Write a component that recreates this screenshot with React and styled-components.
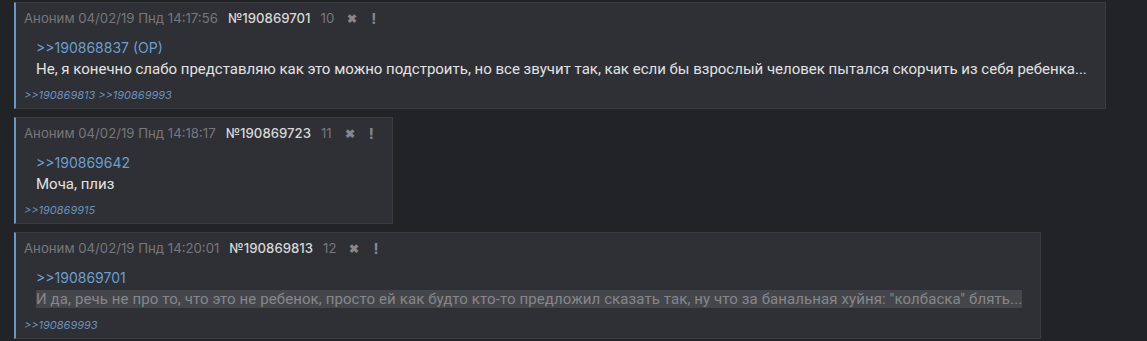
import React from 'react';
import styled, { createGlobalStyle } from 'styled-components';

const GlobalStyle = createGlobalStyle`
  html, body {
    margin: 0;
    padding: 0;
    background: #222327;
  }
  body {
    font-family: Roboto, "Noto Sans", sans-serif;
  }
`;

const posts = [
  {
    num: '190869701',
    date: '04/02/19 Пнд 14:17:56',
    idx: 10,
    reply: '>>190868837 (OP)',
    text: 'Не, я конечно слабо представляю как это можно подстроить, но все звучит так, как если бы взрослый человек пытался скорчить из себя ребенка...',
    answers: ['>>190869813', '>>190869993'],
  },
  {
    num: '190869723',
    date: '04/02/19 Пнд 14:18:17',
    idx: 11,
    reply: '>>190869642',
    text: 'Моча, плиз',
    answers: ['>>190869915'],
  },
  {
    num: '190869813',
    date: '04/02/19 Пнд 14:20:01',
    idx: 12,
    reply: '>>190869701',
    text: 'И да, речь не про то, что это не ребенок, просто ей как будто кто-то предложил сказать так, ну что за банальная хуйня: "колбаска" блять...',
    answers: ['>>190869993'],
    muted: true,
  },
];

function Post({ post }) {
  return (
    <PostBox>
      <Header>
        <Meta>Аноним {post.date}</Meta>
        <Num>№{post.num}</Num>
        <Idx>{post.idx}</Idx>
        <Action>✖</Action>
        <Bang>!</Bang>
      </Header>
      <Body>
        <ReplyLink>{post.reply}</ReplyLink>
        <Text $muted={post.muted}>{post.text}</Text>
      </Body>
      <Answers>
        {post.answers.map((a) => (
          <Answer key={a}>{a}</Answer>
        ))}
      </Answers>
    </PostBox>
  );
}

export default function App() {
  return (
    <>
      <GlobalStyle />
      <Thread>
        {posts.map((p) => (
          <Post key={p.num} post={p} />
        ))}
      </Thread>
    </>
  );
}

const Thread = styled.div`
  display: flex;
  flex-direction: column;
  align-items: flex-start;
  gap: 8px;
  padding: 2px 0 0 14px;
`;

const PostBox = styled.div`
  box-sizing: border-box;
  background: #2f3035;
  border: 1px solid #3b3c41;
  border-left: 2px solid #6a98c2;
  padding: 6px 18px 6px 8px;
  width: fit-content;
`;

const Header = styled.div`
  display: flex;
  align-items: center;
  height: 18px;
  font-family: Inter, "Noto Sans", sans-serif;
  font-size: 13.2px;
  color: #76777c;
`;

const Meta = styled.span`
  margin-right: 10px;
`;

const Num = styled.span`
  color: #d8d8d8;
  font-weight: 500;
  margin-right: 10px;
`;

const Idx = styled.span`
  margin-right: 13px;
`;

const Action = styled.span`
  font-size: 12px;
  font-weight: 700;
  margin-right: 14px;
  color: #86878c;
`;

const Bang = styled.span`
  font-size: 15px;
  font-weight: 700;
  color: #86878c;
`;

const Body = styled.div`
  padding: 11px 0 0 12px;
  display: flex;
  flex-direction: column;
`;

const ReplyLink = styled.span`
  font-family: Inter, "Noto Sans", sans-serif;
  font-size: 14px;
  line-height: 20px;
  color: #6b9ed0;
`;

const Text = styled.span`
  font-family: Roboto, "Noto Sans", sans-serif;
  font-size: 15px;
  line-height: 18px;
  margin-top: 2px;
  color: ${({ $muted }) => ($muted ? '#85868b' : '#e2e2e2')};
  background: ${({ $muted }) => ($muted ? '#45464b' : 'transparent')};
  letter-spacing: ${({ $muted }) => ($muted ? '0.1px' : 'normal')};
  width: fit-content;
`;

const Answers = styled.div`
  display: flex;
  gap: 3px;
  margin-top: 10px;
`;

const Answer = styled.span`
  font-family: Inter, "Noto Sans", sans-serif;
  font-style: italic;
  font-size: 11px;
  line-height: 14px;
  color: #6a8fb8;
`;
